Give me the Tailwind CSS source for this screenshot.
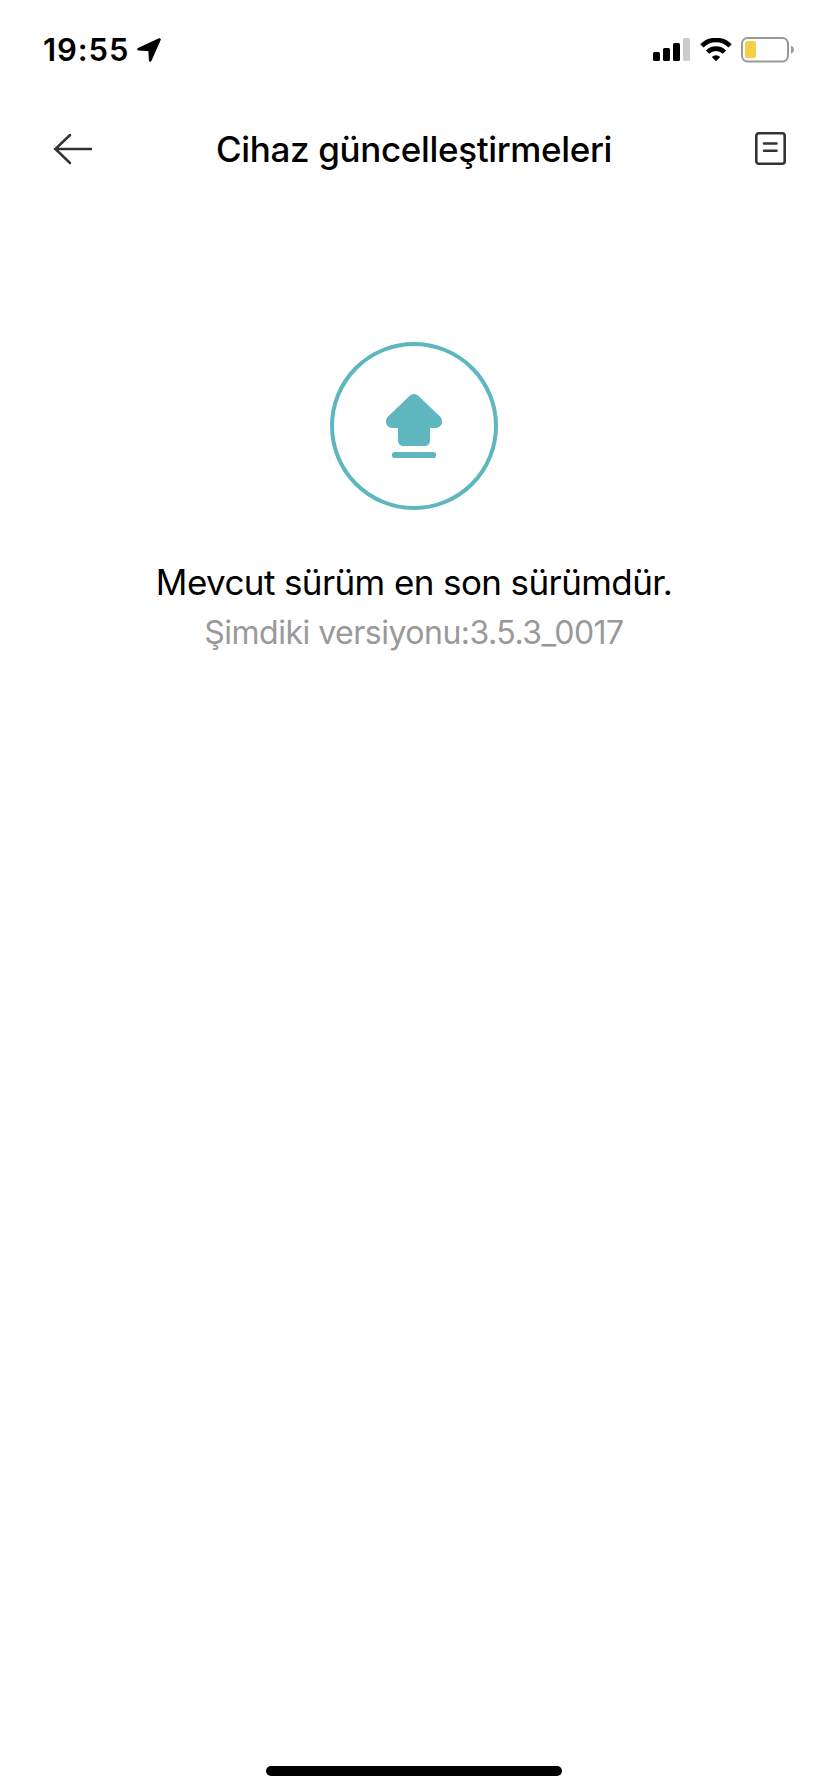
<!DOCTYPE html>
<html lang="tr">
<head>
  <meta charset="UTF-8">
  <title>Cihaz güncelleştirmeleri</title>
  <script src="https://cdn.jsdelivr.net/npm/@tailwindcss/browser@4"></script>
</head>
<body class="bg-white text-black font-['Inter',sans-serif]">
  <div class="flex flex-col w-[828px] h-[1792px] overflow-hidden">

    <!-- Status bar -->
    <div class="flex items-center justify-between h-[100px] pl-[43px] pr-[34px]">
      <div class="flex items-center">
        <span id="time" class="w-[94px] pb-0.5 text-[31px] leading-none font-semibold tracking-[0.9px] whitespace-nowrap">19:55</span>
        <svg class="w-6 h-6" viewBox="0 0 24 24">
          <path d="M22.5 1.5L13.2 22.5L12.6 12L1.5 11.2Z" fill="#000" stroke="#000" stroke-width="2.6" stroke-linejoin="round"/>
        </svg>
      </div>
      <div class="flex items-center">
        <svg class="w-[37px] h-6" viewBox="0 0 37 24">
          <rect x="0" y="14" width="7" height="9" rx="1.5"/>
          <rect x="10" y="10" width="7" height="13" rx="1.5"/>
          <rect x="20" y="5" width="7" height="18" rx="1.5"/>
          <rect x="30" y="0" width="7" height="23" rx="1.5" fill="#ccc"/>
        </svg>
        <svg class="w-8 h-6 ml-[9.5px]" viewBox="0 0 32 24">
          <g fill="none" stroke="#000" stroke-width="4.6">
            <path d="M1.9 7.8A20 20 0 0 1 30.1 7.8"/>
            <path d="M7.6 14.1A12 12 0 0 1 24.4 14.1"/>
          </g>
          <path d="M16 23.2L11.8 18.9A6.2 6.2 0 0 1 20.2 18.9Z"/>
        </svg>
        <svg class="w-[53px] h-[26px] ml-[9.5px]" viewBox="0 0 53 26">
          <rect x="1" y="1" width="46" height="23.5" rx="5.5" fill="none" stroke="#999" stroke-width="2"/>
          <rect x="4" y="4" width="11" height="17" rx="2.5" fill="#f7ce46"/>
          <path d="M50 8.8Q53 10 53 12.8T50 17Z" fill="#999"/>
        </svg>
      </div>
    </div>

    <!-- Header -->
    <header class="grid grid-cols-[1fr_auto_1fr] items-center h-[98px] pl-[42px] pr-[42px]">
      <svg class="w-10 h-8 ml-[11px]" viewBox="0 0 40 32" fill="none" stroke="#333" stroke-width="2.5" stroke-linecap="round">
        <path d="M2 16H38M17 2L2.4 16L17 30"/>
      </svg>
      <h1 id="title" class="text-[35px] leading-none font-medium tracking-[-0.35px] whitespace-nowrap">Cihaz güncelleştirmeleri</h1>
      <svg class="w-[31px] h-[33px] mb-px justify-self-end" viewBox="0 0 31 33" fill="none" stroke="#333" stroke-width="2.6">
        <rect x="1.3" y="1.3" width="28.4" height="30.4" rx="2.5"/>
        <path d="M9 11.5H21.5M9 18.7H21.5" stroke-linecap="round"/>
      </svg>
    </header>

    <!-- Update state -->
    <main class="flex flex-1 flex-col items-center pt-36">
      <div class="flex items-center justify-center w-42 h-42 rounded-full border-4 border-[#5eb6bf]">
        <svg class="w-14 h-16" viewBox="0 0 56 64" fill="#5eb6bf">
          <path d="M23.7 1.7Q28 -1.7 32.3 1.7L54.2 22.8C58 27 55.5 34 50 34H44V46Q44 52 38 52H18Q12 52 12 46V34H6C0.500 34 -2 27 1.8 22.8Z"/>
          <rect x="6" y="58" width="44" height="6" rx="2.5"/>
        </svg>
      </div>
      <p id="status" class="mt-[50px] text-[35px] leading-[44px] tracking-[-0.6px] whitespace-nowrap">Mevcut sürüm en son sürümdür.</p>
      <p id="version" class="mt-[9px] text-[32px] leading-10 tracking-[-0.5px] text-[#999] whitespace-nowrap">Şimdiki versiyonu:3.5.3_0017</p>
    </main>

    <!-- Home indicator -->
    <div class="w-[296px] h-[10px] mx-auto mb-4 rounded-full bg-black"></div>
  </div>
</body>
</html>
